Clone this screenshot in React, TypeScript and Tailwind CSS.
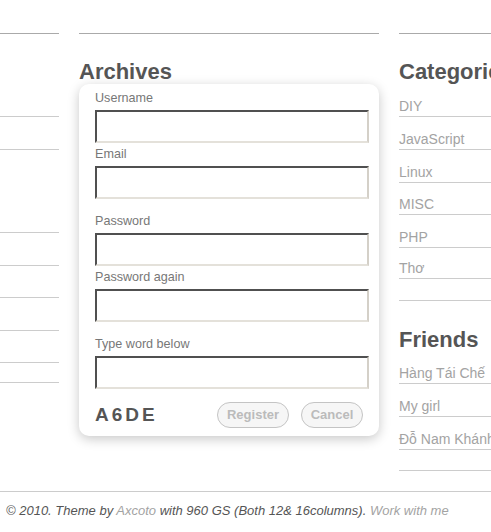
import React from "react";

const inputCls =
  "block w-[274px] h-[33px] bg-white border-2 border-t-[#505050] border-l-[#505050] border-r-[#d4d0c8] border-b-[#e4e1da] outline-none";

function Field({ label, top }: { label: string; top: string }) {
  return (
    <div className={top}>
      <div className="text-[12.6px] leading-[16px] text-[#777]">{label}</div>
      <input className={inputCls + " mt-[4px]"} />
    </div>
  );
}

function Item({ text, h }: { text: string; h: string }) {
  return (
    <div className={`${h} flex items-end border-b border-[#cccccc] text-[14px] leading-[20px] text-[#a3a3a3] whitespace-nowrap`}>
      <span>{text}</span>
    </div>
  );
}

export default function App() {
  return (
    <div
      className="w-[491px] h-[532px] overflow-hidden bg-white"
      style={{ fontFamily: '"Liberation Sans", Arial, sans-serif' }}
    >
      <div className="h-[491px] pt-[33px] flex gap-[20px]">
        {/* left column */}
        <div className="w-[59px] shrink-0 flex flex-col border-t border-[#aaaaaa]">
          <div className="h-[83px] border-b border-[#cccccc]" />
          <div className="h-[33px] border-b border-[#cccccc]" />
          <div className="h-[83px] border-b border-[#cccccc]" />
          <div className="h-[33px] border-b border-[#cccccc]" />
          <div className="h-[32px] border-b border-[#cccccc]" />
          <div className="h-[33px] border-b border-[#cccccc]" />
          <div className="h-[32px] border-b border-[#cccccc]" />
          <div className="h-[20px] border-b border-[#cccccc]" />
        </div>

        {/* middle column */}
        <div className="w-[300px] shrink-0 border-t border-[#aaaaaa]">
          <h2 className="mt-[25px] h-[25px] text-[22px] leading-[25px] font-bold text-[#555]">
            Archives
          </h2>
          <div className="w-[300px] bg-white rounded-[10px] shadow-[0_3px_12px_rgba(0,0,0,0.22)] pt-[6px] pl-[16px] pr-[10px] pb-[8px]">
            <Field label="Username" top="" />
            <Field label="Email" top="mt-[3px]" />
            <Field label="Password" top="mt-[14px]" />
            <Field label="Password again" top="mt-[3px]" />
            <Field label="Type word below" top="mt-[14px]" />
            <div className="mt-[13px] h-[26px] flex items-center">
              <span className="text-[19px] font-bold tracking-[3px] text-[#555] leading-[26px]">
                A6DE
              </span>
              <div className="ml-auto mr-[6px] flex gap-[12px]">
                <button className="h-[26px] w-[72px] rounded-full border border-[#c4c4c4] bg-[#f6f6f6] text-[13px] font-bold text-[#bbbbbb]">
                  Register
                </button>
                <button className="h-[26px] w-[62px] rounded-full border border-[#c4c4c4] bg-[#f6f6f6] text-[13px] font-bold text-[#bbbbbb]">
                  Cancel
                </button>
              </div>
            </div>
          </div>
        </div>

        {/* right column */}
        <div className="w-[92px] shrink-0 flex flex-col border-t border-[#aaaaaa]">
          <h2 className="mt-[25px] h-[25px] text-[22px] leading-[25px] font-bold text-[#555] whitespace-nowrap">
            Categories
          </h2>
          <Item text="DIY" h="h-[33px]" />
          <Item text="JavaScript" h="h-[33px]" />
          <Item text="Linux" h="h-[33px]" />
          <Item text="MISC" h="h-[32px]" />
          <Item text="PHP" h="h-[33px]" />
          <Item text="Thơ" h="h-[31px]" />
          <div className="h-[22px] border-b border-[#cccccc]" />
          <h2 className="mt-[26px] h-[25px] text-[22px] leading-[25px] font-bold text-[#555] whitespace-nowrap">
            Friends
          </h2>
          <Item text="Hàng Tái Chế" h="h-[32px]" />
          <Item text="My girl" h="h-[33px]" />
          <Item text="Đỗ Nam Khánh" h="h-[33px]" />
          <div className="h-[21px] border-b border-[#cccccc]" />
        </div>
      </div>

      <footer className="border-t border-[#cccccc] pt-[11px] pl-[6px] text-[13px] leading-[16px] italic text-[#555] whitespace-nowrap">
        © 2010. Theme by <span className="text-[#a3a3a3]">Axcoto</span> with 960 GS (Both 12&amp; 16columns).{" "}
        <span className="text-[#a3a3a3]">Work with me</span>
      </footer>
    </div>
  );
}
